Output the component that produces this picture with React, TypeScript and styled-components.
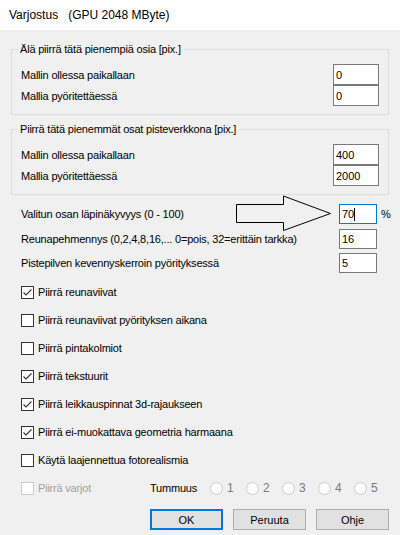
import React from 'react';
import styled, { createGlobalStyle } from 'styled-components';

const GlobalStyle = createGlobalStyle`
  html, body {
    margin: 0;
    padding: 0;
    background: #f0f0f0;
  }

  body {
    font-family: 'Liberation Sans', Arial, sans-serif;
    font-size: 11px;
    letter-spacing: -0.2px;
    color: #000;
  }
`;

const Window = styled.div`
  width: 400px;
  height: 535px;
  display: flex;
  flex-direction: column;
  background: #f0f0f0;
  overflow: hidden;
`;

const TitleBar = styled.div`
  height: 30px;
  flex-shrink: 0;
  display: flex;
  align-items: center;
  padding-left: 9px;
  background: #fff;
  font-size: 12px;
  letter-spacing: 0;
  white-space: pre;
`;

const Body = styled.div`
  flex: 1;
  display: flex;
  flex-direction: column;
  padding: 12px 11px 0;
`;

const Group = styled.fieldset<{ $mb: number }>`
  margin: 0 0 ${props => props.$mb}px;
  padding: 8px 9px 8px;
  border: 1px solid #dcdcdc;
  min-width: 0;
  display: flex;
  flex-direction: column;
`;

const Legend = styled.legend`
  margin-left: -4px;
  padding: 0 3px;
  line-height: 14px;
`;

const GroupRow = styled.div`
  height: 21px;
  display: flex;
  align-items: center;
  justify-content: space-between;
`;

const TextBox = styled.div<{ $width: number; $focused?: boolean }>`
  width: ${props => props.$width}px;
  height: 100%;
  box-sizing: border-box;
  display: flex;
  align-items: center;
  padding-left: 2px;
  background: #fff;
  letter-spacing: 0;
  border: 1px solid ${props => (props.$focused ? '#0078d7' : '#7a7a7a')};
`;

const Caret = styled.span`
  width: 1px;
  height: 13px;
  background: #000;
`;

const Fields = styled.div`
  display: flex;
  flex-direction: column;
  gap: 4.5px;
  padding-left: 10px;
`;

const FieldRow = styled.div`
  position: relative;
  height: 20px;
  display: grid;
  grid-template-columns: 314px 38px auto;
  column-gap: 4px;
  align-items: center;
`;

const Pointer = styled.svg`
  position: absolute;
  left: 215px;
  top: -9px;
  width: 96px;
  height: 37px;
`;

const Options = styled.div`
  display: flex;
  flex-direction: column;
  gap: 12px;
  margin-top: 11px;
  padding-left: 10px;
`;

const Option = styled.label<{ $disabled?: boolean }>`
  height: 16px;
  display: flex;
  align-items: center;
  gap: 4px;
  color: ${props => (props.$disabled ? '#a0a0a0' : '#000')};
`;

const Box = styled.span<{ $disabled?: boolean }>`
  width: 13px;
  height: 13px;
  box-sizing: border-box;
  flex-shrink: 0;
  display: flex;
  background: #fff;
  border: 1px solid ${props => (props.$disabled ? '#cccccc' : '#333333')};
`;

const ShadeRow = styled.div`
  height: 16px;
  display: grid;
  grid-template-columns: 129px 60px repeat(5, 36px);
  align-items: center;
`;

const Radio = styled.span`
  display: flex;
  align-items: center;
  gap: 4px;
  color: #7a7a7a;
  font-size: 12px;
`;

const Circle = styled.span`
  width: 13px;
  height: 13px;
  box-sizing: border-box;
  border-radius: 50%;
  border: 1px solid #cccccc;
  background: #fcfcfc;
`;

const Buttons = styled.div`
  display: flex;
  justify-content: flex-end;
  gap: 10px;
  margin-top: 13px;
`;

const Button = styled.button<{ $primary?: boolean }>`
  width: 73px;
  height: 21px;
  box-sizing: border-box;
  padding: 0;
  font-family: inherit;
  font-size: 11px;
  color: #000;
  background: #e1e1e1;
  border: ${props => (props.$primary ? '2px solid #0078d7' : '1px solid #adadad')};
`;

const Check = ({ checked, disabled }: { checked?: boolean; disabled?: boolean }) => (
  <Box $disabled={disabled}>
    {checked && (
      <svg width="11" height="11" viewBox="0 0 11 11">
        <path d="M1.5 5.5 L4 8 L9.5 2.5" fill="none" stroke="#333" strokeWidth="1.1" />
      </svg>
    )}
  </Box>
);

const options = [
  { label: 'Piirrä reunaviivat', checked: true },
  { label: 'Piirrä reunaviivat pyörityksen aikana', checked: false },
  { label: 'Piirrä pintakolmiot', checked: false },
  { label: 'Piirrä tekstuurit', checked: true },
  { label: 'Piirrä leikkauspinnat 3d-rajaukseen', checked: true },
  { label: 'Piirrä ei-muokattava geometria harmaana', checked: true },
  { label: 'Käytä laajennettua fotorealismia', checked: false },
];

export default function App() {
  return (
    <Window>
      <GlobalStyle />
      <TitleBar>Varjostus   (GPU 2048 MByte)</TitleBar>
      <Body>
        <Group $mb={7}>
          <Legend>Älä piirrä tätä pienempiä osia [pix.]</Legend>
          <GroupRow>
            <span>Mallin ollessa paikallaan</span>
            <TextBox $width={46}>0</TextBox>
          </GroupRow>
          <GroupRow>
            <span>Mallia pyöritettäessä</span>
            <TextBox $width={46}>0</TextBox>
          </GroupRow>
        </Group>

        <Group $mb={9}>
          <Legend>Piirrä tätä pienemmät osat pisteverkkona [pix.]</Legend>
          <GroupRow>
            <span>Mallin ollessa paikallaan</span>
            <TextBox $width={46}>400</TextBox>
          </GroupRow>
          <GroupRow>
            <span>Mallia pyöritettäessä</span>
            <TextBox $width={46}>2000</TextBox>
          </GroupRow>
        </Group>

        <Fields>
          <FieldRow>
            <span>Valitun osan läpinäkyvyys (0 - 100)</span>
            <TextBox $width={38} $focused>
              70
              <Caret />
            </TextBox>
            <span>%</span>
            <Pointer viewBox="0 0 96 37">
              <polygon
                points="0.5,9.5 47.5,9.5 47.5,1 94.5,18.5 47.5,35.5 47.5,27.5 0.5,27.5"
                fill="none"
                stroke="#000"
                strokeWidth="1"
              />
            </Pointer>
          </FieldRow>
          <FieldRow>
            <span>Reunapehmennys (0,2,4,8,16,... 0=pois, 32=erittäin tarkka)</span>
            <TextBox $width={38}>16</TextBox>
          </FieldRow>
          <FieldRow>
            <span>Pistepilven kevennyskerroin pyörityksessä</span>
            <TextBox $width={38}>5</TextBox>
          </FieldRow>
        </Fields>

        <Options>
          {options.map(o => (
            <Option key={o.label}>
              <Check checked={o.checked} />
              {o.label}
            </Option>
          ))}
          <ShadeRow>
            <Option $disabled>
              <Check disabled />
              Piirrä varjot
            </Option>
            <span>Tummuus</span>
            {[1, 2, 3, 4, 5].map(n => (
              <Radio key={n}>
                <Circle />
                {n}
              </Radio>
            ))}
          </ShadeRow>
        </Options>

        <Buttons>
          <Button $primary>OK</Button>
          <Button>Peruuta</Button>
          <Button>Ohje</Button>
        </Buttons>
      </Body>
    </Window>
  );
}
